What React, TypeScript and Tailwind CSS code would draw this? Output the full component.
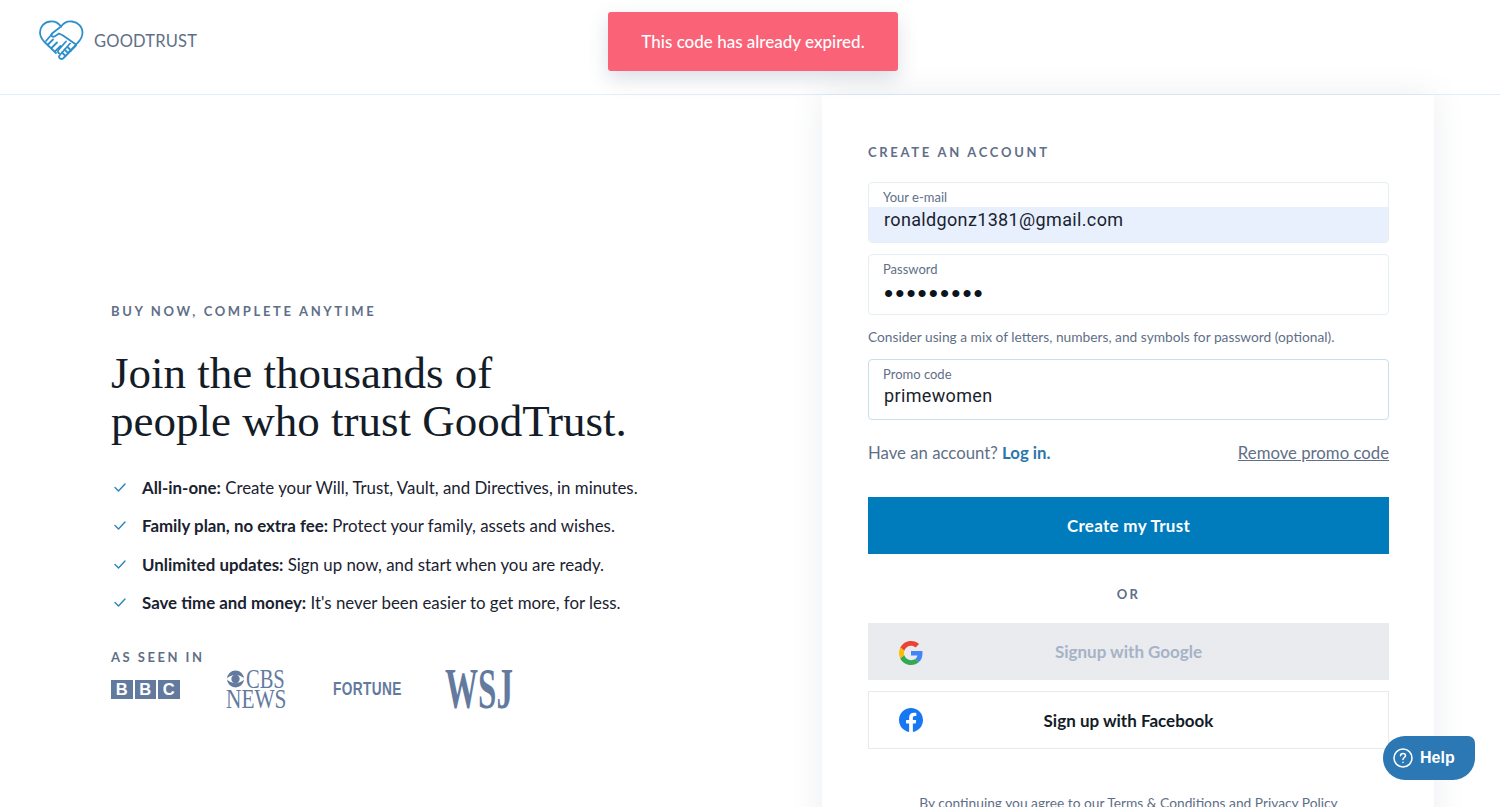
import React from 'react';

const points = [
  { lead: 'All-in-one:', rest: ' Create your Will, Trust, Vault, and Directives, in minutes.' },
  { lead: 'Family plan, no extra fee:', rest: ' Protect your family, assets and wishes.' },
  { lead: 'Unlimited updates:', rest: ' Sign up now, and start when you are ready.' },
  { lead: 'Save time and money:', rest: " It's never been easier to get more, for less." },
];

const HeartLogo = () => (
  <svg width="45" height="42" viewBox="0 0 45 42" fill="none" stroke="#2f8fcb" strokeWidth="1.8" strokeLinecap="round" strokeLinejoin="round">
    <path d="M22 6.5C19 2.5 15 1 11 1.5C5 2.2 1 7 1 12.5C1 16.5 3 19.5 6 22.5L17 33" />
    <path d="M22 6.5C25 2.5 29 1 33 1.5C39 2.2 43.500 7 43.500 12.500C43.500 16.500 41.500 20 38.500 23L29 33" />
    <path d="M22 6.500L13 13.500C11.500 15 13 17.500 15.500 16.500L20 13.500L24 15.500L37 24.500" />
    <path d="M13 14L7 21" />
    <path d="M9 24.500L14 19.500M12.500 28L18 22.500M16 31.500L21.500 26" />
    <path d="M27 21.500L19.500 30C18.500 31.500 19 33 20.500 33.500" />
    <path d="M31 23.500L20.500 35.500C19 37.500 22 40 24 38.500L37 25.500" />
    <path d="M25.500 29.500L29 33M28.500 27L32 30.500M23 32.500L26.500 36" />
  </svg>
);

const GoogleIcon = () => (
  <svg width="24" height="24" viewBox="0 0 48 48">
    <path fill="#EA4335" d="M24 9.500c3.500 0 6.700 1.200 9.200 3.600l6.900-6.900C35.900 2.400 30.500 0 24 0 14.600 0 6.500 5.400 2.600 13.200l8 6.200C12.500 13.700 17.800 9.500 24 9.500z" />
    <path fill="#4285F4" d="M47 24.500c0-1.600-.1-3.100-.4-4.500H24v9h12.900c-.6 3-2.200 5.500-4.800 7.200l7.700 6C44.300 38.500 47 32.100 47 24.500z" />
    <path fill="#FBBC05" d="M10.500 28.600A14.400 14.400 0 0 1 9.800 24c0-1.600.3-3.100.8-4.600l-8-6.200A24 24 0 0 0 0 24c0 3.900.9 7.500 2.600 10.800l7.900-6.200z" />
    <path fill="#34A853" d="M24 48c6.500 0 11.900-2.100 15.900-5.800l-7.700-6c-2.100 1.400-4.900 2.300-8.200 2.300-6.200 0-11.500-4.200-13.400-9.900l-8 6.200C6.500 42.600 14.600 48 24 48z" />
  </svg>
);

const FacebookIcon = () => (
  <svg width="24" height="24" viewBox="0 0 24 24">
    <path fill="#1877F2" d="M24 12.070C24 5.400 18.630 0 12 0S0 5.400 0 12.070c0 6.030 4.390 11.020 10.130 11.930v-8.440H7.080v-3.490h3.050V9.410c0-3.030 1.790-4.700 4.530-4.700 1.310 0 2.680.24 2.680.24v2.970h-1.510c-1.490 0-1.960.93-1.960 1.880v2.270h3.330l-.53 3.490h-2.800V24C19.610 23.090 24 18.100 24 12.070z" />
  </svg>
);

const Check = () => (
  <svg width="14" height="11" viewBox="0 0 14 11" fill="none" stroke="#2a86b8" strokeWidth="1.4" strokeLinecap="round" strokeLinejoin="round">
    <path d="M2 5.500L5.500 9L12 2" />
  </svg>
);

const App: React.FC = () => {
  return (
    <div className="relative h-[807px] w-full overflow-hidden bg-white font-['Lato',sans-serif] text-[#1a2230]">
      <header className="h-[95px] border-b border-[#e3eefb] flex items-start pl-[39px] pt-[20px] gap-[10px]">
        <HeartLogo />
        <span className="pt-[11px] text-[16.500px] leading-[20px] tracking-[0.2px] text-[#5f6f88]">GOODTRUST</span>
      </header>

      <main className="flex">
        <section className="w-[822px] pl-[111px] pt-[208px]">
          <p className="text-[13px] leading-[16px] font-bold tracking-[2.65px] text-[#5f6f88]">BUY NOW, COMPLETE ANYTIME</p>
          <h1 className="mt-[30px] font-['Liberation_Serif',serif] text-[45px] leading-[48px] text-[#141c28]">
            Join the thousands of
            <br />
            people who trust GoodTrust.
          </h1>
          <ul className="mt-[31px] flex flex-col">
            {points.map(p => (
              <li key={p.lead} className="h-[38.300px] flex items-start gap-[15px] text-[16.850px] leading-[24px]">
                <span className="pl-[2px] pt-[6px]"><Check /></span>
                <span className="whitespace-nowrap"><b className="font-bold">{p.lead}</b>{p.rest}</span>
              </li>
            ))}
          </ul>
          <p className="mt-[20px] text-[13px] leading-[16px] font-bold tracking-[2.5px] text-[#5f6f88]">AS SEEN IN</p>
          <div className="flex items-center h-[42px] mt-[3px] text-[#637a9f]">
            <div className="flex gap-[2px] w-[115px]">
              {['B', 'B', 'C'].map((c, i) => (
                <span key={i} className="w-[21.500px] h-[19px] bg-[#637a9f] text-white text-[16.500px] leading-[19px] font-bold text-center font-['Liberation_Sans',sans-serif]">{c}</span>
              ))}
            </div>
            <div className="w-[107px] flex flex-col font-['Liberation_Serif',serif] text-[27px] leading-[20px]">
              <span className="flex items-center gap-[1px]">
                <svg width="19" height="18" viewBox="0 0 19 17">
                  <circle cx="9.500" cy="8.500" r="8.500" fill="#637a9f" />
                  <path d="M0.500 8.500C5 3 14 3 18.500 8.500C14 14 5 14 0.500 8.500Z" fill="#fff" />
                  <circle cx="9.500" cy="8.500" r="4.200" fill="#637a9f" />
                </svg>
                <span className="inline-block w-[60px] scale-x-[0.76] origin-left">CBS</span>
              </span>
              <span className="scale-x-[0.79] origin-left">NEWS</span>
            </div>
            <span className="w-[112px] font-['Liberation_Sans',sans-serif] font-bold text-[19px] tracking-[0.5px] scale-x-[0.72] origin-left">FORTUNE</span>
            <span className="font-['Liberation_Serif',serif] font-bold text-[56px] leading-[42px] scale-x-[0.59] origin-left">WSJ</span>
          </div>
        </section>

        <section className="w-[612px] h-[800px] pl-[46px] pt-[49px] bg-white shadow-[0_0_30px_rgba(60,80,110,0.1)]">
          <h2 className="text-[13px] leading-[16px] font-bold tracking-[2.7px] text-[#5f6f88]">CREATE AN ACCOUNT</h2>
          <div className="mt-[22px] w-[521px] h-[61px] rounded border border-[#e6eef5] overflow-hidden flex flex-col">
            <div className="pl-[14px] pt-[6px] h-[24px] text-[13px] leading-[16px] text-[#5f6f88]">Your e-mail</div>
            <div className="pl-[15px] flex-1 bg-[#e8f0fe] font-['Roboto',sans-serif] text-[18px] leading-[26px] tracking-[0.35px] text-[#1a2230]">ronaldgonz1381@gmail.com</div>
          </div>
          <div className="mt-[11px] w-[521px] h-[61px] rounded border border-[#e6eef5] flex flex-col">
            <div className="pl-[14px] pt-[6px] h-[24px] text-[13px] leading-[16px] text-[#5f6f88]">Password</div>
            <div className="pl-[15px] font-['Liberation_Sans',sans-serif] text-[26px] leading-[28px] tracking-[2.100px] text-[#0c1420]">•••••••••</div>
          </div>
          <p className="mt-[13px] text-[13.750px] leading-[18px] text-[#5f6f88] whitespace-nowrap">Consider using a mix of letters, numbers, and symbols for password (optional).</p>
          <div className="mt-[13px] w-[521px] h-[61px] rounded border border-[#c9dfea] flex flex-col">
            <div className="pl-[14px] pt-[6px] h-[24px] text-[13px] leading-[16px] text-[#5f6f88]">Promo code</div>
            <div className="pl-[15px] font-['Roboto',sans-serif] text-[18px] leading-[24px] tracking-[0.35px] text-[#1a2230]">primewomen</div>
          </div>
          <div className="mt-[21px] w-[521px] flex justify-between text-[16.750px] leading-[24px] text-[#5f6f88]">
            <span>Have an account? <a className="font-bold text-[#2a77ad]">Log in.</a></span>
            <a className="underline">Remove promo code</a>
          </div>
          <button className="mt-[32px] block w-[521px] h-[57px] bg-[#007bbb] text-white text-[17px] tracking-[0.3px] font-bold">Create my Trust</button>
          <p className="mt-[32px] w-[521px] text-center text-[13px] leading-[16px] font-bold tracking-[2.300px] text-[#5f6f88]">OR</p>
          <button className="mt-[21px] relative block w-[521px] h-[57px] pt-[1px] bg-[#e9ebef] text-[#a6b3c6] text-[17px] font-bold">
            <span className="absolute left-[31px] top-[18px]"><GoogleIcon /></span>
            Signup with Google
          </button>
          <button className="mt-[11px] relative block w-[521px] h-[58px] pt-[1px] bg-white border border-[#e6e9ee] text-[#141c28] text-[17px] font-bold">
            <span className="absolute left-[30px] top-[16px]"><FacebookIcon /></span>
            Sign up with Facebook
          </button>
          <p className="mt-[45px] w-[521px] text-center text-[13.750px] leading-[18px] text-[#5f6f88]">By continuing you agree to our Terms &amp; Conditions and Privacy Policy</p>
        </section>
      </main>

      <div className="absolute left-[608px] top-[12px] w-[290px] h-[59px] rounded-[3px] bg-[#f96277] flex items-center justify-center text-white text-[17px] font-medium shadow-[0_8px_20px_rgba(60,80,110,0.18)]">
        This code has already expired.
      </div>

      <button className="absolute left-[1383px] top-[736px] w-[92px] h-[44px] bg-[#2b78b4] text-white rounded-tl-[22px] rounded-bl-[22px] rounded-br-[22px] rounded-tr-[7px] flex items-center pl-[10px] gap-[7px] font-['Liberation_Sans',sans-serif] font-bold text-[16px]">
        <svg width="20" height="20" viewBox="0 0 20 20" fill="none" stroke="#fff" strokeWidth="1.500" strokeLinecap="round">
          <circle cx="10" cy="10" r="9" />
          <path d="M7.500 7.800C7.500 6.300 8.700 5.500 10 5.500C11.400 5.500 12.500 6.400 12.500 7.700C12.500 9.500 10 9.500 10 11.500" />
          <path d="M10 14.300V14.500" />
        </svg>
        Help
      </button>
    </div>
  );
};

export default App;
